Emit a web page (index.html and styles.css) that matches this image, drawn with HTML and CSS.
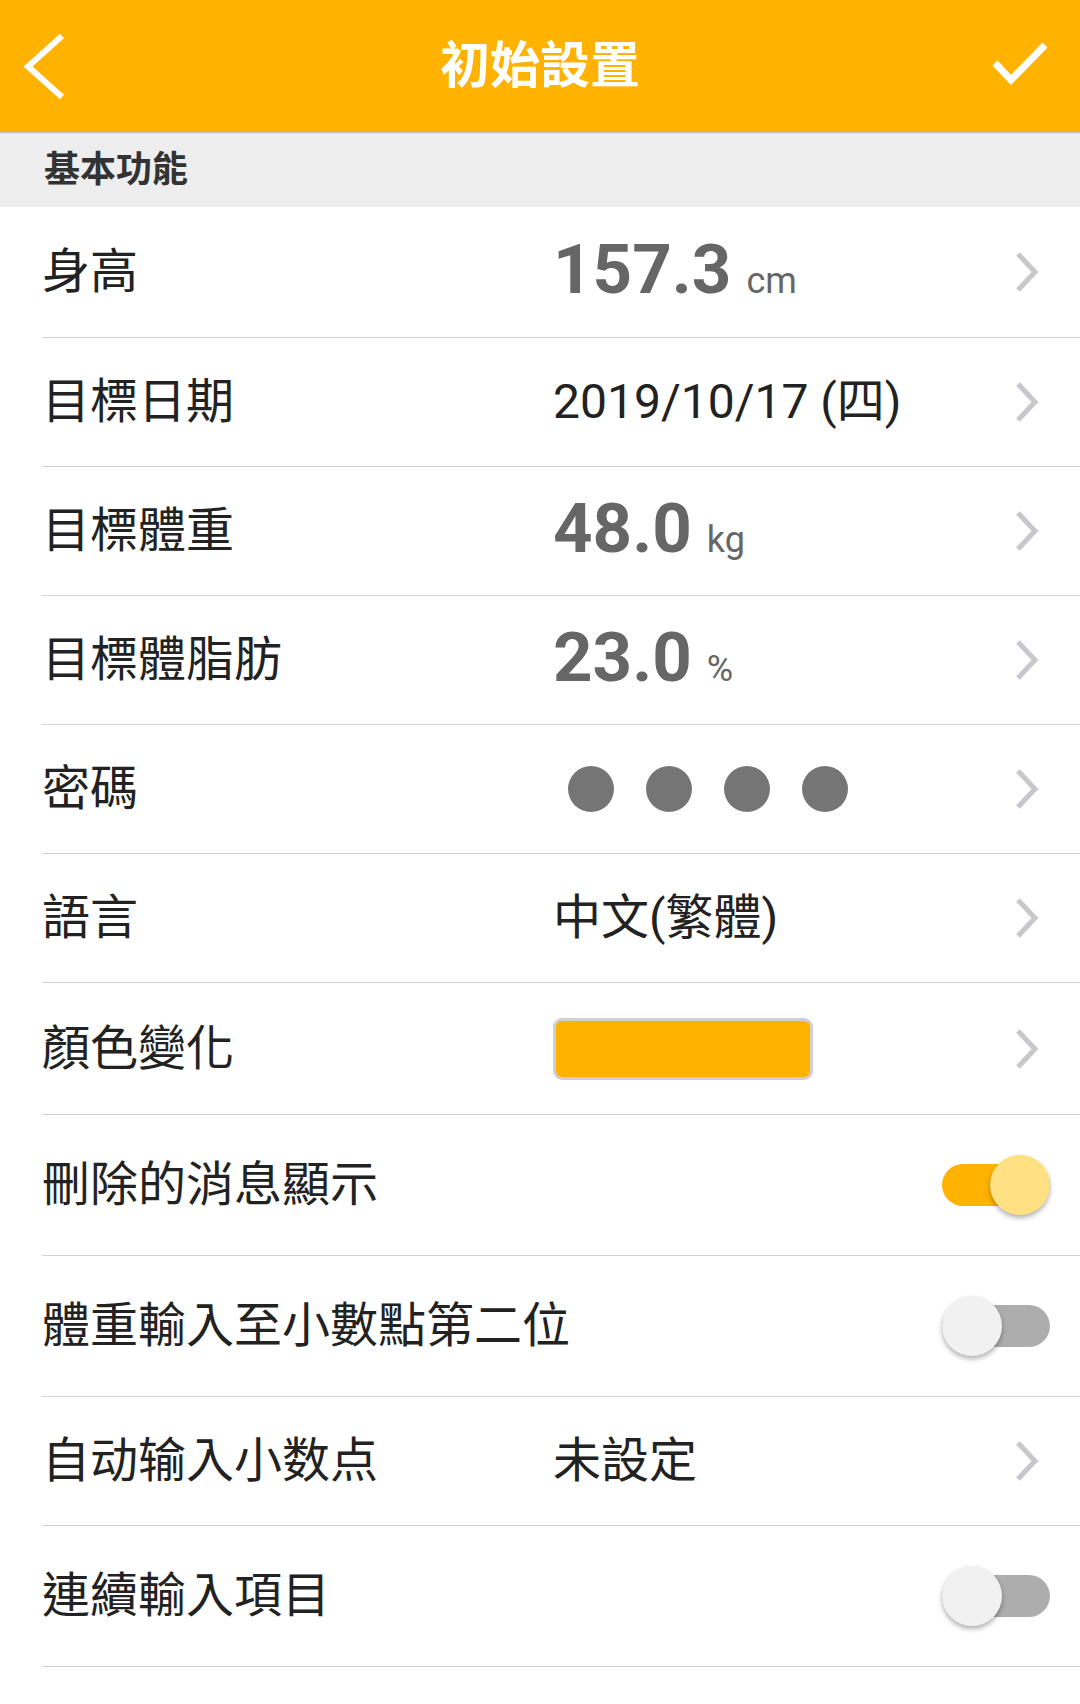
FILE: index.html
```html
<!doctype html>
<html>
<head>
<meta charset="utf-8">
<title>初始設置</title>
<link rel="stylesheet" href="styles.css">
</head>

<body>
<div class="topbar">
	<div class="topbar-btn">
		<svg width="100" height="132" viewBox="0 0 100 132"><polyline points="62,36 28,66.5 62,97" fill="none" stroke="#fff" stroke-width="6"/></svg>
	</div>
	<h1 class="topbar-title">初始設置</h1>
	<div class="topbar-btn">
		<svg width="100" height="132" viewBox="0 0 100 132"><polyline points="15,63 31,80 65,45" fill="none" stroke="#fff" stroke-width="7"/></svg>
	</div>
</div>

<div class="section">基本功能</div>

<ul class="list">
	<li class="row row-first">
		<span class="label">身高</span>
		<span class="value"><b class="num">157.3</b><span class="unit">cm</span></span>
		<svg class="arrow" viewBox="0 0 26 40"><polyline points="4,2 21,20 4,38" fill="none" stroke="#c7c7cc" stroke-width="5"/></svg>
	</li>
	<li class="row">
		<span class="label">目標日期</span>
		<span class="value">2019/10/17 (四)</span>
		<svg class="arrow" viewBox="0 0 26 40"><polyline points="4,2 21,20 4,38" fill="none" stroke="#c7c7cc" stroke-width="5"/></svg>
	</li>
	<li class="row">
		<span class="label">目標體重</span>
		<span class="value"><b class="num">48.0</b><span class="unit">kg</span></span>
		<svg class="arrow" viewBox="0 0 26 40"><polyline points="4,2 21,20 4,38" fill="none" stroke="#c7c7cc" stroke-width="5"/></svg>
	</li>
	<li class="row">
		<span class="label">目標體脂肪</span>
		<span class="value"><b class="num">23.0</b><span class="unit">%</span></span>
		<svg class="arrow" viewBox="0 0 26 40"><polyline points="4,2 21,20 4,38" fill="none" stroke="#c7c7cc" stroke-width="5"/></svg>
	</li>
	<li class="row">
		<span class="label">密碼</span>
		<span class="value dots"><i class="dot"></i><i class="dot"></i><i class="dot"></i><i class="dot"></i></span>
		<svg class="arrow" viewBox="0 0 26 40"><polyline points="4,2 21,20 4,38" fill="none" stroke="#c7c7cc" stroke-width="5"/></svg>
	</li>
	<li class="row">
		<span class="label">語言</span>
		<span class="value">中文(繁體)</span>
		<svg class="arrow" viewBox="0 0 26 40"><polyline points="4,2 21,20 4,38" fill="none" stroke="#c7c7cc" stroke-width="5"/></svg>
	</li>
	<li class="row row-color">
		<span class="label">顏色變化</span>
		<span class="value"><i class="swatch"></i></span>
		<svg class="arrow" viewBox="0 0 26 40"><polyline points="4,2 21,20 4,38" fill="none" stroke="#c7c7cc" stroke-width="5"/></svg>
	</li>
	<li class="row row-tall">
		<span class="label">刪除的消息顯示</span>
		<span class="toggle on"></span>
	</li>
	<li class="row row-tall">
		<span class="label">體重輸入至小數點第二位</span>
		<span class="toggle"></span>
	</li>
	<li class="row">
		<span class="label">自动输入小数点</span>
		<span class="value">未設定</span>
		<svg class="arrow" viewBox="0 0 26 40"><polyline points="4,2 21,20 4,38" fill="none" stroke="#c7c7cc" stroke-width="5"/></svg>
	</li>
	<li class="row row-tall">
		<span class="label">連續輸入項目</span>
		<span class="toggle"></span>
	</li>
</ul>
</body>
</html>
```

FILE: styles.css
```css
*{ margin:0; padding:0; list-style:none; box-sizing:border-box;}
body{ width:1080px; background:#fff; color:#222; font-family:Roboto, "Noto Sans CJK TC", sans-serif;}

.topbar{ height:132px; background:#ffb300; display:flex; align-items:center; box-shadow:0 1px 1px rgba(0,0,0,.18); position:relative; z-index:1;}
.topbar-btn{ width:100px; height:132px; flex-shrink:0;}
.topbar-btn svg{ display:block;}
.topbar-title{ flex:1; text-align:center; color:#fff; font-size:50px; font-weight:bold; line-height:1;}

.section{ height:75px; background:#eee; padding-left:44px; display:flex; align-items:center; font-size:36px; font-weight:bold; color:#333; line-height:1;}

.list{ padding-left:42px;}
.row{ height:129px; display:flex; align-items:center; border-bottom:1px solid #d2d2d2; padding-right:40px;}
.row-first{ height:131px;}
.row-color{ height:132px;}
.row-tall{ height:141px; padding-right:30px;}

.label{ width:511px; flex-shrink:0; font-size:48px; color:#222; line-height:1;}
.row-tall .label{ flex:1; width:auto;}
.value{ flex:1; font-size:48px; color:#222; line-height:1; display:flex; align-items:baseline;}
.num{ font-size:69px; font-weight:bold; color:#666; line-height:1; margin-top:-6px;}
.unit{ font-size:36px; color:#666; margin-left:15px;}
.arrow{ width:26px; height:40px; flex-shrink:0;}

.dots{ align-items:center; gap:32px; padding-left:15px;}
.dot{ width:46px; height:46px; border-radius:50%; background:#757575;}

.swatch{ width:260px; height:62px; border:3px solid #d0d0d0; border-radius:9px; background:#ffb300;}

.toggle{ width:108px; height:60px; position:relative; flex-shrink:0;}
.toggle:before{ content:""; position:absolute; left:0; top:9px; width:108px; height:42px; border-radius:21px; background:#adadad;}
.toggle:after{ content:""; position:absolute; left:0; top:0; width:60px; height:60px; border-radius:50%; background:#f1f1f1; box-shadow:0 3px 5px rgba(0,0,0,.3);}
.toggle.on:before{ background:#ffb300;}
.toggle.on:after{ left:48px; background:#ffe082;}
```
